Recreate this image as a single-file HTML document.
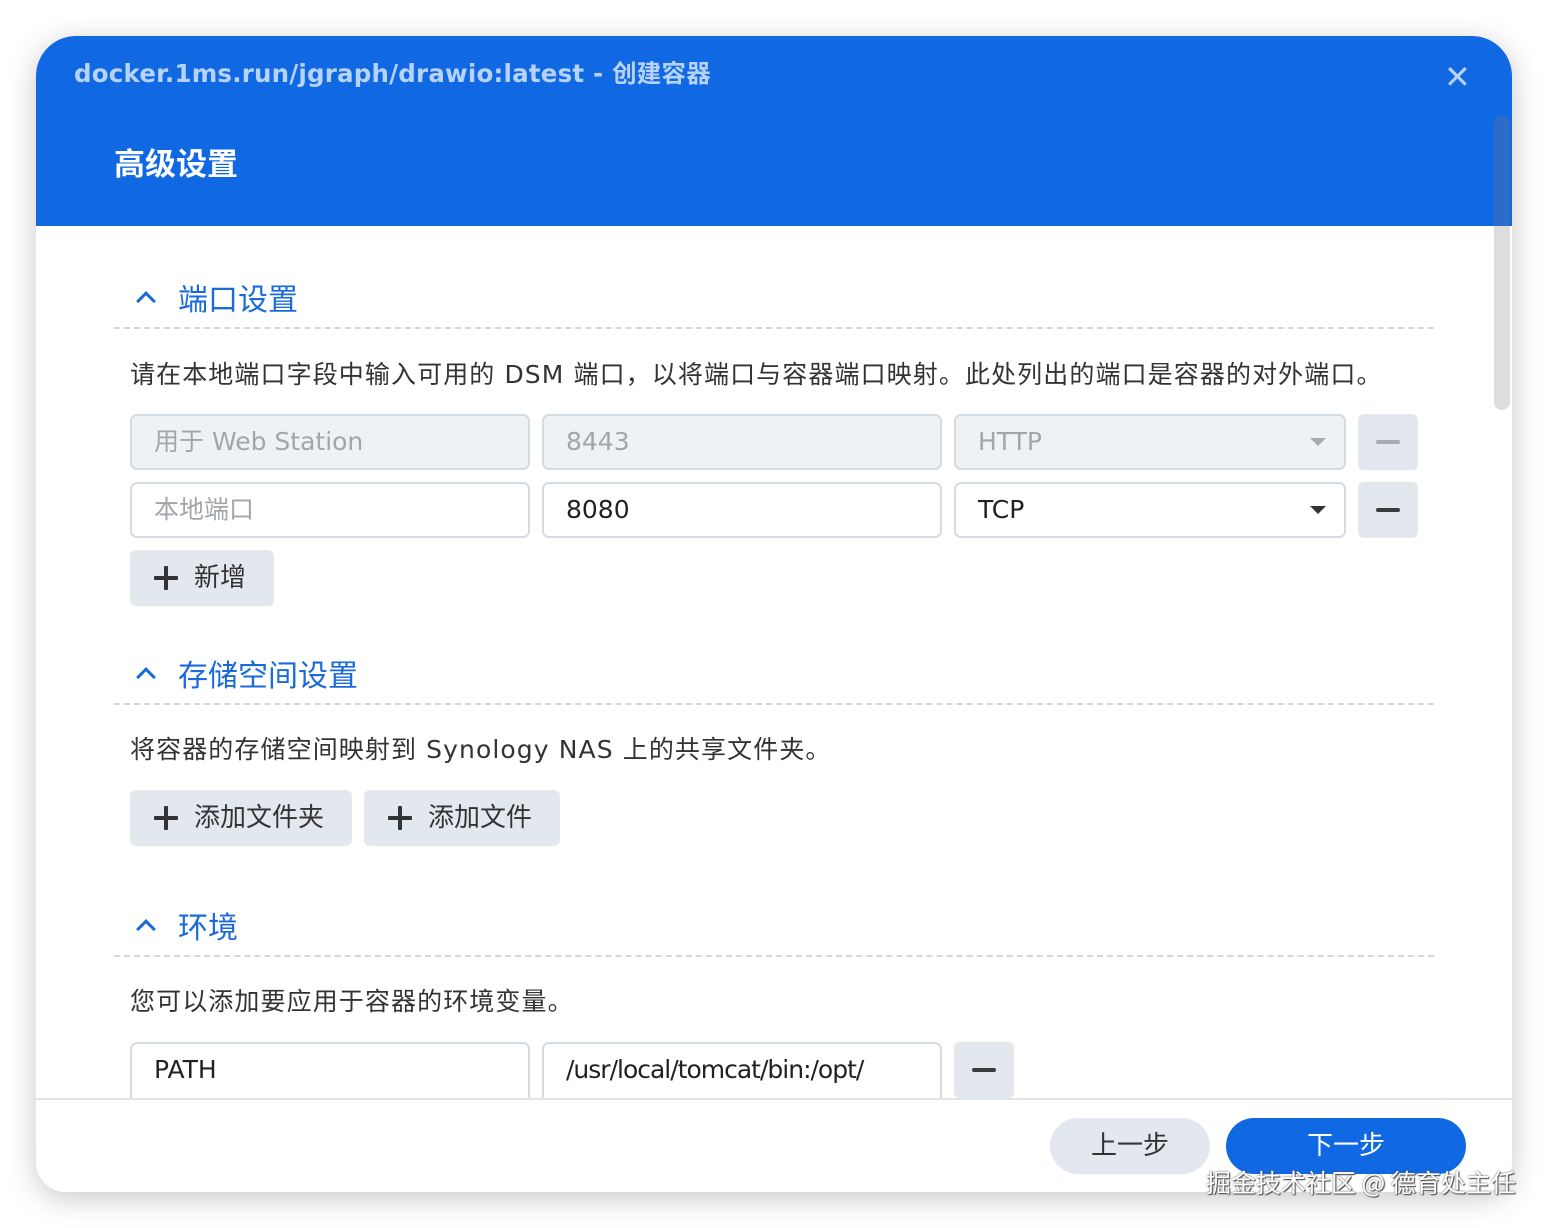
<!DOCTYPE html>
<html><head><meta charset="utf-8"><style>
*{box-sizing:border-box;margin:0;padding:0}
body{width:1548px;height:1228px;background:#fff;font-family:"DejaVu Sans","Noto Sans CJK SC",sans-serif;position:relative;overflow:hidden}
.dlg{position:absolute;left:36px;top:36px;width:1476px;height:1156px;border-radius:40px 40px 30px 30px;background:#fff;box-shadow:0 6px 30px rgba(0,0,0,0.22);overflow:hidden}
.hdr{position:absolute;left:0;top:0;width:1476px;height:190px;background:#1068e3}
.a{position:absolute;white-space:nowrap}
.t1{left:38px;top:22px;color:#b7d3fb;font-size:24.5px;font-weight:bold;line-height:32px;letter-spacing:0.2px}
.t2{left:78px;top:106px;color:#fff;font-size:31px;font-weight:bold;line-height:40px;font-family:"Noto Sans CJK SC",sans-serif}
.x{left:1408px;top:22px;color:#b7d3fb;font-size:32px;font-weight:bold}
.sec{color:#1a6ad9;font-size:30px;line-height:40px;font-family:"Noto Sans CJK SC",sans-serif}
.chev{position:absolute;width:14px;height:14px;border-left:3px solid #1a6ad9;border-top:3px solid #1a6ad9;transform:rotate(45deg)}
.dash{position:absolute;left:78px;width:1320px;border-top:2px dashed #d3d6da}
.desc{color:#333;font-size:25px;line-height:34px;letter-spacing:1.1px}
.in{position:absolute;height:56px;border:2px solid #d4dce2;border-radius:7px;font-size:25px;line-height:52px;padding-left:22px;color:#222;background:#fff;overflow:hidden;white-space:nowrap}
.dis{background:#eef2f5;color:#a2a6aa}
.btn{position:absolute;height:56px;background:#e3e8ee;border-radius:6px;font-size:26px;line-height:56px;color:#333;padding-left:64px}
.btn:before{content:"";position:absolute;left:24px;top:26px;width:24px;height:4px;background:#333;border-radius:1px}
.btn:after{content:"";position:absolute;left:34px;top:16px;width:4px;height:24px;background:#333;border-radius:1px}
.mn{position:absolute;width:60px;height:56px;background:#e3e8ee;border-radius:6px}
.mn i{position:absolute;left:18px;top:26px;width:24px;height:4px;border-radius:2px;background:#3a3d40}
.arr{position:absolute;right:18px;top:22px;border-left:8px solid transparent;border-right:8px solid transparent;border-top:8px solid #333}
</style></head><body>
<div class="dlg">
 <div class="hdr"></div>
 <div class="a t1">docker.1ms.run/jgraph/drawio:latest - 创建容器</div>
 <div class="a x">✕</div>
 <div class="a t2">高级设置</div>
 <div class="a" style="left:1458px;top:79px;width:16px;height:295px;border-radius:8px;background:rgba(120,120,120,0.25)"></div>

 <div class="chev" style="left:103px;top:258px"></div>
 <div class="a sec" style="left:142px;top:241px">端口设置</div>
 <div class="dash" style="top:291px"></div>
 <div class="a desc" style="left:94px;top:322px">请在本地端口字段中输入可用的 DSM 端口，以将端口与容器端口映射。此处列出的端口是容器的对外端口。</div>

 <div class="in dis" style="left:94px;top:378px;width:400px">用于 Web Station</div>
 <div class="in dis" style="left:506px;top:378px;width:400px">8443</div>
 <div class="in dis" style="left:918px;top:378px;width:392px">HTTP<div class="arr" style="border-top-color:#a9acaf"></div></div>
 <div class="mn" style="left:1322px;top:378px"><i style="background:#a9acaf"></i></div>

 <div class="in" style="left:94px;top:446px;width:400px;color:#a2a6aa">本地端口</div>
 <div class="in" style="left:506px;top:446px;width:400px">8080</div>
 <div class="in" style="left:918px;top:446px;width:392px">TCP<div class="arr"></div></div>
 <div class="mn" style="left:1322px;top:446px"><i></i></div>

 <div class="btn" style="left:94px;top:514px;width:144px">新增</div>

 <div class="chev" style="left:103px;top:634px"></div>
 <div class="a sec" style="left:142px;top:617px">存储空间设置</div>
 <div class="dash" style="top:667px"></div>
 <div class="a desc" style="left:94px;top:697px">将容器的存储空间映射到 Synology NAS 上的共享文件夹。</div>
 <div class="btn" style="left:94px;top:754px;width:222px">添加文件夹</div>
 <div class="btn" style="left:328px;top:754px;width:196px">添加文件</div>

 <div class="chev" style="left:103px;top:886px"></div>
 <div class="a sec" style="left:142px;top:869px">环境</div>
 <div class="dash" style="top:919px"></div>
 <div class="a desc" style="left:94px;top:949px">您可以添加要应用于容器的环境变量。</div>
 <div class="in" style="left:94px;top:1006px;width:400px;height:70px">PATH</div>
 <div class="in" style="left:506px;top:1006px;width:400px;height:70px;letter-spacing:-1px">/usr/local/tomcat/bin:/opt/</div>
 <div class="mn" style="left:918px;top:1006px;height:56px"><i></i></div>

 <div class="a" style="left:0;top:1062px;width:1476px;height:94px;background:#fff;border-top:2px solid #e2e5e8"></div>
 <div class="a" style="left:1014px;top:1082px;width:160px;height:56px;border-radius:28px;background:#e3e8ee;color:#333;font-size:26px;line-height:56px;text-align:center">上一步</div>
 <div class="a" style="left:1190px;top:1082px;width:240px;height:56px;border-radius:28px;background:#1068e3;color:#fff;font-size:26px;line-height:56px;text-align:center">下一步</div>
</div>
<div class="a" style="left:1206px;top:1164px;font-size:25px;color:#fff;text-shadow:0 0 2px #555,1px 1px 1px #444;font-family:'Noto Sans CJK SC',sans-serif">掘金技术社区 @ 德育处主任</div>
</body></html>
